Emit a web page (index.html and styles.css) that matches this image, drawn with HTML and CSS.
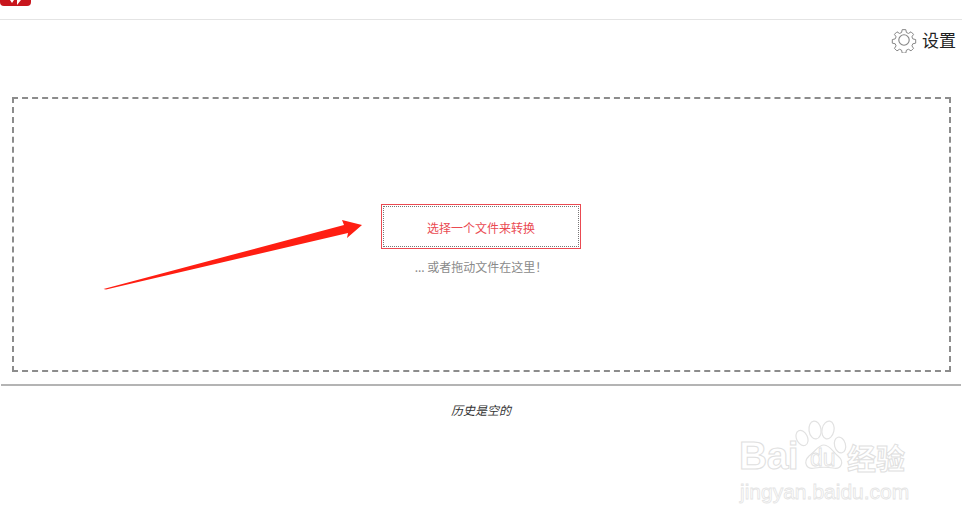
FILE: index.html
```html
<!DOCTYPE html>
<html lang="zh-CN">
    <head>
        <meta charset="UTF-8" />
        <title>文件转换</title>
        <link rel="stylesheet" href="styles.css">
    </head>
    <body>
        <header class="top-bar">
            <div class="logo">
                <svg class="logo-mark" width="14" height="6" viewBox="0 0 14 6">
                    <path d="M1 0 L5 0 L3 3 Z M8 0 L12 0 L8 5 Z" fill="#fff" />
                </svg>
            </div>
        </header>
        <div class="toolbar">
            <a class="settings">
                <svg class="gear" width="26" height="26" viewBox="0 0 26 26" fill="none" stroke="#858585" stroke-width="1.1">
                    <path d="M11 1.5 h4 l.7 3.2 2.3 1 2.8-1.8 2.8 2.8-1.8 2.8 1 2.3 3.2.7 v4 l-3.2.7 -1 2.3 1.8 2.8 -2.8 2.8 -2.8-1.8 -2.3 1 -.7 3.2 h-4 l-.7-3.2 -2.3-1 -2.8 1.8 -2.8-2.8 1.8-2.8 -1-2.3 -3.2-.7 v-4 l3.2-.7 1-2.3 -1.8-2.8 2.8-2.8 2.8 1.8 2.3-1 z" transform="translate(1.3 1.3) scale(.9)" />
                    <circle cx="13" cy="13" r="5.2" />
                </svg>
                <span>设置</span>
            </a>
        </div>
        <main class="drop-zone">
            <button type="button" class="pick-button"><span>选择一个文件来转换</span></button>
            <p class="drop-hint">... 或者拖动文件在这里！</p>
        </main>
        <hr class="divider" />
        <p class="history-empty">历史是空的</p>

        <svg class="arrow" width="270" height="76" viewBox="0 0 270 76">
            <path d="M1.5 70 L242 6 L240 1 L260 6 L245 19 L246 14 L4 70.5 Z" fill="#ff1e12" />
        </svg>

        <div class="watermark">
            <div class="wm-row">
                <span class="wm-bai">Bai</span>
                <svg class="wm-paw" width="54" height="52" viewBox="0 0 54 52" fill="#fff" stroke="#e2e2e2" stroke-width="1.2">
                    <ellipse cx="7" cy="18" rx="5.5" ry="8" transform="rotate(-25 7 18)" />
                    <ellipse cx="20" cy="10" rx="6" ry="9" transform="rotate(-8 20 10)" />
                    <ellipse cx="33" cy="10" rx="6" ry="9" transform="rotate(12 33 10)" />
                    <ellipse cx="45" cy="25" rx="5.5" ry="8" transform="rotate(-15 45 25)" />
                    <path d="M29 25 C35 25 38 32 43 36 C50 42 46 50 38 48 C32 47 26 47 20 48 C11 50 8 42 14 36 C20 32 23 25 29 25 Z" />
                </svg>
                <span class="wm-du">du</span>
                <span class="wm-cn">经验</span>
            </div>
            <div class="wm-url">jingyan.baidu.com</div>
        </div>
    </body>
</html>
```

FILE: styles.css
```css
* {
    box-sizing: border-box;
}

body {
    margin: 0;
    height: 523px;
    overflow: hidden;
    background-color: #fff;
    font-family: "Noto Sans CJK SC", "Liberation Sans", sans-serif;
    font-size: 12px;
    color: #333;
}

.top-bar {
    height: 20px;
    border-bottom: 1px solid #e4e4e4;
}
.logo {
    width: 31px;
    height: 6px;
    background-color: #c8161d;
    border-radius: 0 0 4px 4px;
    display: flex;
    justify-content: center;
}

.toolbar {
    height: 77px;
    display: flex;
    justify-content: flex-end;
    align-items: flex-start;
    padding: 7px 6px 0 0;
}
.settings {
    display: flex;
    align-items: center;
    gap: 5px;
    font-size: 17px;
    line-height: 26px;
    color: #222;
}

.drop-zone {
    margin: 0 11px 0 12px;
    height: 275px;
    border: 2px dashed #8c8c8c;
    display: flex;
    flex-direction: column;
    align-items: center;
    padding-top: 105px;
}
.pick-button {
    width: 200px;
    height: 45px;
    margin-right: 1px;
    padding: 1px;
    background: #fff;
    border: 1px solid #ea4a52;
    font: inherit;
    color: #ea4a52;
    cursor: pointer;
}
.pick-button span {
    display: flex;
    justify-content: center;
    align-items: center;
    height: 100%;
    padding-top: 1px;
    border: 1px dotted #777;
}
.drop-hint {
    margin: 8px 1px 0 0;
    line-height: 20px;
    color: #8a8a8a;
}

.divider {
    margin: 12px 1px 0 1px;
    border: none;
    border-top: 2px solid #b4b4b4;
}
.history-empty {
    margin: 15px 0 0;
    line-height: 18px;
    text-align: center;
    font-style: italic;
    color: #333;
}

.arrow {
    position: absolute;
    left: 102px;
    top: 219px;
}

.watermark {
    position: absolute;
    left: 737px;
    top: 418px;
    width: 175px;
    color: #fff;
}
.wm-row {
    position: relative;
    height: 58px;
    font-family: "Liberation Sans", sans-serif;
}
.wm-bai {
    position: absolute;
    left: 2px;
    top: 17px;
    font-size: 39px;
    line-height: 42px;
    font-weight: 700;
    letter-spacing: -.5px;
    -webkit-text-stroke: 1px #e0e0e0;
}
.wm-paw {
    position: absolute;
    left: 58px;
    top: 2px;
}
.wm-du {
    position: absolute;
    left: 73px;
    top: 28px;
    font-size: 23px;
    line-height: 24px;
    -webkit-text-stroke: .8px #e0e0e0;
}
.wm-cn {
    position: absolute;
    left: 110px;
    top: 21px;
    font-family: "Noto Sans CJK SC", sans-serif;
    font-size: 29px;
    line-height: 36px;
    font-weight: 700;
    -webkit-text-stroke: 1px #e0e0e0;
}
.wm-url {
    margin: 4px 0 0 3px;
    font-family: "Liberation Sans", sans-serif;
    font-size: 21px;
    line-height: 24px;
    white-space: nowrap;
    -webkit-text-stroke: .8px #e4e4e4;
}
```
